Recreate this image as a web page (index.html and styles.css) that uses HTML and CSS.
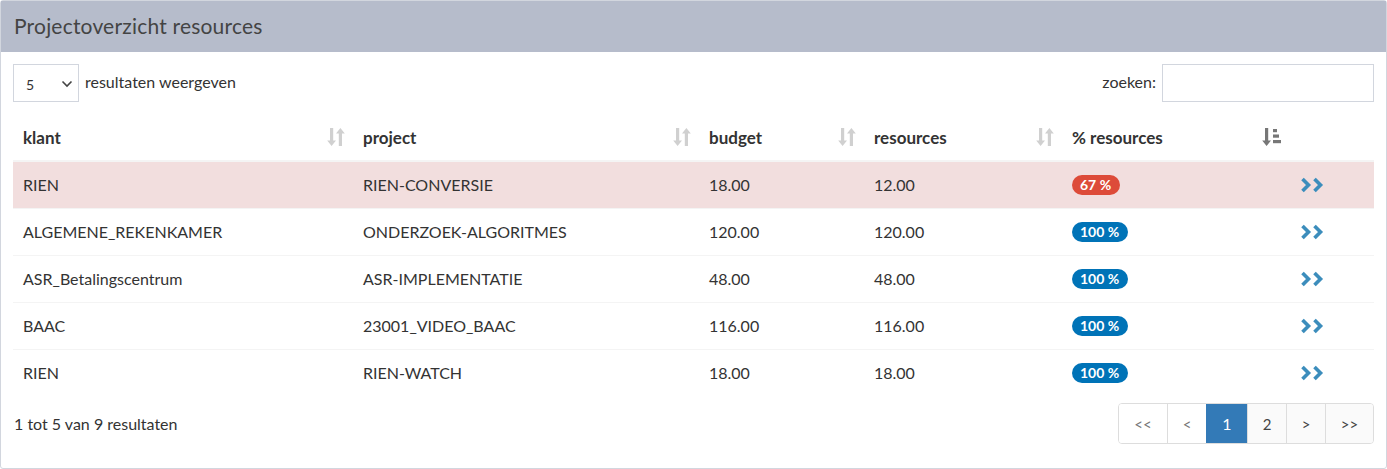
FILE: index.html
```html
<!DOCTYPE html>
<html lang="nl">
<head>
  <meta charset="UTF-8">
  <title>Projectoverzicht resources</title>
  <link rel="stylesheet" href="styles.css">
</head>
<body>
  <div class="box">
    <div class="box-header">
      <h3>Projectoverzicht resources</h3>
    </div>
    <div class="box-body">
      <div class="controls">
        <label class="length">
          <span class="select">5
            <svg width="12" height="8" viewBox="0 0 12 8"><path d="M1.5 1.5 6 6l4.5-4.5" fill="none" stroke="#444" stroke-width="1.6"/></svg>
          </span>
          resultaten weergeven
        </label>
        <label class="search">zoeken: <input type="text"></label>
      </div>

      <table class="grid">
        <colgroup>
          <col style="width:340px">
          <col style="width:346px">
          <col style="width:165px">
          <col style="width:198px">
          <col style="width:228px">
          <col>
        </colgroup>
        <thead>
          <tr>
            <th>klant <span class="sort"></span></th>
            <th>project <span class="sort"></span></th>
            <th>budget <span class="sort"></span></th>
            <th>resources <span class="sort"></span></th>
            <th>% resources <span class="sort active"></span></th>
            <th></th>
          </tr>
        </thead>
        <tbody id="rows"></tbody>
      </table>

      <div class="footer">
        <div class="info">1 tot 5 van 9 resultaten</div>
        <ul class="pager">
          <li class="disabled wide">&lt;&lt;</li>
          <li class="disabled">&lt;</li>
          <li class="active">1</li>
          <li>2</li>
          <li>&gt;</li>
          <li class="wide">&gt;&gt;</li>
        </ul>
      </div>
    </div>
  </div>

  <script>
    const projects = [ {klant:'RIEN', project:'RIEN-CONVERSIE', budget:'18.00', res:'12.00', pct:67},
                       {klant:'ALGEMENE_REKENKAMER', project:'ONDERZOEK-ALGORITMES', budget:'120.00', res:'120.00', pct:100},
                       {klant:'ASR_Betalingscentrum', project:'ASR-IMPLEMENTATIE', budget:'48.00', res:'48.00', pct:100},
                       {klant:'BAAC', project:'23001_VIDEO_BAAC', budget:'116.00', res:'116.00', pct:100},
                       {klant:'RIEN', project:'RIEN-WATCH', budget:'18.00', res:'18.00', pct:100}
                     ];

    const sortIcon = '<svg width="18" height="20" viewBox="0 0 18 20"><path d="M3 1h3.2v12.5H9L4.6 19 0.2 13.5H3z" fill="currentColor"/><path d="M11.8 19H15V6.5h2.8L13.4 1 9 6.5h2.8z" fill="currentColor"/></svg>';
    const activeIcon = '<svg width="20" height="20" viewBox="0 0 20 20"><path d="M3 1h3.2v12.5H9L4.6 19 0.2 13.5H3z" fill="currentColor"/><rect x="11" y="2" width="4" height="3.2" fill="currentColor"/><rect x="11" y="7.5" width="6" height="3.2" fill="currentColor"/><rect x="11" y="13" width="8" height="3.2" fill="currentColor"/></svg>';
    const arrows = '<svg width="26" height="16" viewBox="0 0 26 16"><path d="M2.5 2l6 6-6 6M14.5 2l6 6-6 6" fill="none" stroke="#3c8dbc" stroke-width="3.6"/></svg>';

    document.querySelectorAll('.sort').forEach(function(el) {
      el.innerHTML = el.classList.contains('active') ? activeIcon : sortIcon;
    });

    const tbody = document.getElementById('rows');
    projects.forEach(function(p) {
      const tr = document.createElement('tr');
      if (p.pct < 100) tr.className = 'danger'; // onder budget
      tr.innerHTML = `<td>${p.klant}</td><td>${p.project}</td><td>${p.budget}</td><td>${p.res}</td>
        <td><span class="badge ${p.pct < 100 ? 'red' : 'blue'}">${p.pct} %</span></td>
        <td class="go">${arrows}</td>`;
      tbody.appendChild(tr);
    });
  </script>
</body>
</html>
```

FILE: styles.css
```css
* {
  margin: 0;
  padding: 0;
  box-sizing: border-box;
}
body {
  font-family: "Lato", "Noto Sans", sans-serif;
  font-size: 16px;
  color: #333;
  background: #fff;
}
.box {
  width: 1387px;
  height: 469px;
  border: 1px solid #d2d6de;
  border-radius: 3px;
  background: #fff;
}
.box-header {
  height: 51px;
  background: #b6bccb;
  padding: 0 13px 3px;
  display: flex;
  align-items: center;
}
.box-header h3 {
  font-size: 21px;
  font-weight: normal;
  color: #444;
  letter-spacing: 0.2px;
}
.box-body {
  padding: 12px 12px 0 12px;
}
.controls {
  display: flex;
  justify-content: space-between;
  align-items: center;
  height: 38px;
}
.length, .search {
  display: flex;
  align-items: center;
  gap: 6px;
  padding-bottom: 4px;
}
.length .select {
  margin-bottom: -4px;
}
.search input {
  margin-bottom: -4px;
}
.select {
  width: 66px;
  height: 38px;
  border: 1px solid #d2d6de;
  font-size: 14px;
  display: flex;
  align-items: center;
  justify-content: space-between;
  padding: 2px 5px 0 12px;
}
.search input {
  width: 212px;
  height: 38px;
  border: 1px solid #d2d6de;
  outline: none;
}
.grid {
  width: 100%;
  border-collapse: collapse;
  table-layout: fixed;
  margin-top: 13px;
}
.grid th {
  text-align: left;
  font-weight: bold;
  font-size: 17px;
  height: 46px;
  padding: 0 10px;
  border-bottom: 2px solid #f4f4f4;
  position: relative;
}
.sort {
  position: absolute;
  right: 8px;
  top: 12px;
  color: #d0d0d0;
  line-height: 0;
}
.sort.active {
  color: #777;
}
.grid td {
  height: 47px;
  padding: 0 10px;
  border-top: 1px solid #f4f4f4;
}
.grid tr.danger td {
  background: #f2dede;
}
.badge {
  display: inline-block;
  color: #fff;
  font-size: 14px;
  font-weight: bold;
  padding: 2px 9px 2px 8px;
  border-radius: 10px;
  line-height: 16px;
}
.badge.red {
  background: #dd4b39;
}
.badge.blue {
  background: #0073b7;
}
.go svg {
  display: block;
}
.footer {
  display: flex;
  justify-content: space-between;
  align-items: center;
  margin-top: 7px;
}
.info {
  padding-left: 1px;
}
.pager {
  list-style: none;
  display: flex;
  border: 1px solid #ddd;
  border-radius: 4px;
  overflow: hidden;
  height: 41px;
}
.pager li {
  width: 39px;
  display: flex;
  align-items: center;
  justify-content: center;
  background: #fafafa;
  color: #444;
  border-left: 1px solid #ddd;
  font-size: 15px;
}
.pager li.wide {
  width: 48px;
}
.pager li:first-child {
  border-left: none;
}
.pager li.disabled {
  background: #fff;
  color: #777;
}
.pager li.active {
  background: #337ab7;
  color: #fff;
  border-color: #337ab7;
  width: 41px;
  font-size: 16px;
}
```
